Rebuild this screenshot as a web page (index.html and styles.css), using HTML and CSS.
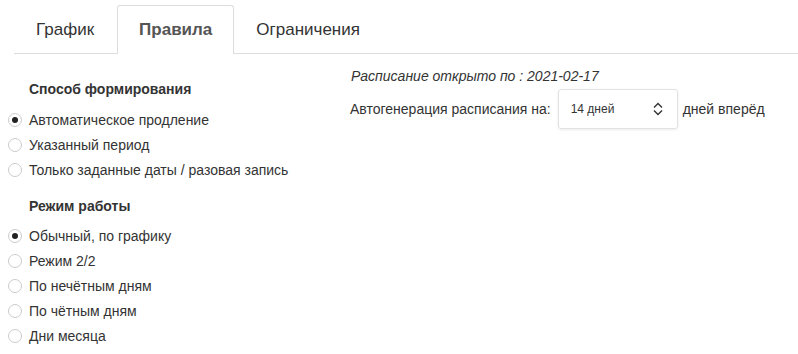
FILE: index.html
```html
<!DOCTYPE html>
<html lang="ru">
<head>
    <meta charset="UTF-8">
    <meta name="viewport" content="width=device-width, initial-scale=1.0">
    <title>Правила расписания</title>
    <link rel="stylesheet" href="styles.css">
</head>
<body>

    <ul class="tabs">
        <li class="tab">График</li>
        <li class="tab active">Правила</li>
        <li class="tab">Ограничения</li>
    </ul>

    <div class="content">
        <div class="left-col">
            <div class="group-title">Способ формирования</div>
            <label class="radio"><input type="radio" name="mode" checked> Автоматическое продление</label>
            <label class="radio"><input type="radio" name="mode"> Указанный период</label>
            <label class="radio"><input type="radio" name="mode"> Только заданные даты / разовая запись</label>

            <div class="group-title second">Режим работы</div>
            <label class="radio"><input type="radio" name="work" checked> Обычный, по графику</label>
            <label class="radio"><input type="radio" name="work"> Режим 2/2</label>
            <label class="radio"><input type="radio" name="work"> По нечётным дням</label>
            <label class="radio"><input type="radio" name="work"> По чётным дням</label>
            <label class="radio"><input type="radio" name="work"> Дни месяца</label>
        </div>

        <div class="right-col">
            <div class="opened">Расписание открыто по : 2021-02-17</div>
            <div class="autogen">
                <span>Автогенерация расписания на:</span>
                <div class="select">
                    <span>14 дней</span>
                    <svg width="12" height="14" viewBox="0 0 12 14">
                        <path d="M2 5.5 L6 1.5 L10 5.5 M2 8.5 L6 12.5 L10 8.5" fill="none" stroke="#333" stroke-width="1.4"/>
                    </svg>
                </div>
                <span>дней вперёд</span>
            </div>
        </div>
    </div>

</body>
</html>
```

FILE: styles.css
```css
body {
    font-family: "Liberation Sans", Arial, sans-serif;
    font-size: 14px;
    color: #333;
    background-color: #ffffff;
    margin: 0;
}

.tabs {
    display: flex;
    list-style: none;
    margin: 5px 0 0 14px;
    padding: 0;
    border-bottom: 1px solid #ddd;
}
.tab {
    height: 47px;
    line-height: 47px;
    padding: 0 21px;
    font-size: 17px;
    color: #333;
    border: 1px solid transparent;
    border-bottom: none;
    margin-bottom: -1px;
    border-radius: 3px 3px 0 0;
}
.tab:first-child {
    padding-right: 22px;
}
.tab.active {
    font-weight: bold;
    color: #555;
    background-color: #fff;
    border-color: #ddd;
    height: 48px;
}

.content {
    display: flex;
}
.left-col {
    width: 342px;
    padding-left: 8px;
}
.group-title {
    font-weight: bold;
    padding-left: 21px;
    margin: 25px 0 8px;
    line-height: 20px;
}
.group-title.second {
    margin-top: 14px;
    margin-bottom: 7px;
}
.radio {
    display: flex;
    align-items: center;
    height: 25px;
}
.radio input {
    appearance: none;
    -webkit-appearance: none;
    width: 14px;
    height: 14px;
    margin: 0 7px 0 0;
    border: 1px solid #ccc;
    border-radius: 50%;
    background: #fff;
    position: relative;
}
.radio input:checked::after {
    content: "";
    position: absolute;
    left: 3px;
    top: 3px;
    width: 6px;
    height: 6px;
    border-radius: 50%;
    background: #222;
}

.right-col {
    padding-top: 12px;
}
.opened {
    font-style: italic;
    line-height: 20px;
    padding-left: 1px;
}
.autogen {
    display: flex;
    align-items: center;
    margin-top: 3px;
}
.select {
    display: flex;
    align-items: center;
    justify-content: space-between;
    box-sizing: border-box;
    width: 120px;
    height: 40px;
    margin: 0 5px 0 7px;
    padding: 0 13px 0 12px;
    border: 1px solid #e2e2e2;
    border-radius: 3px;
    box-shadow: 0 1px 3px rgba(0, 0, 0, 0.08);
    font-size: 12px;
}
```
